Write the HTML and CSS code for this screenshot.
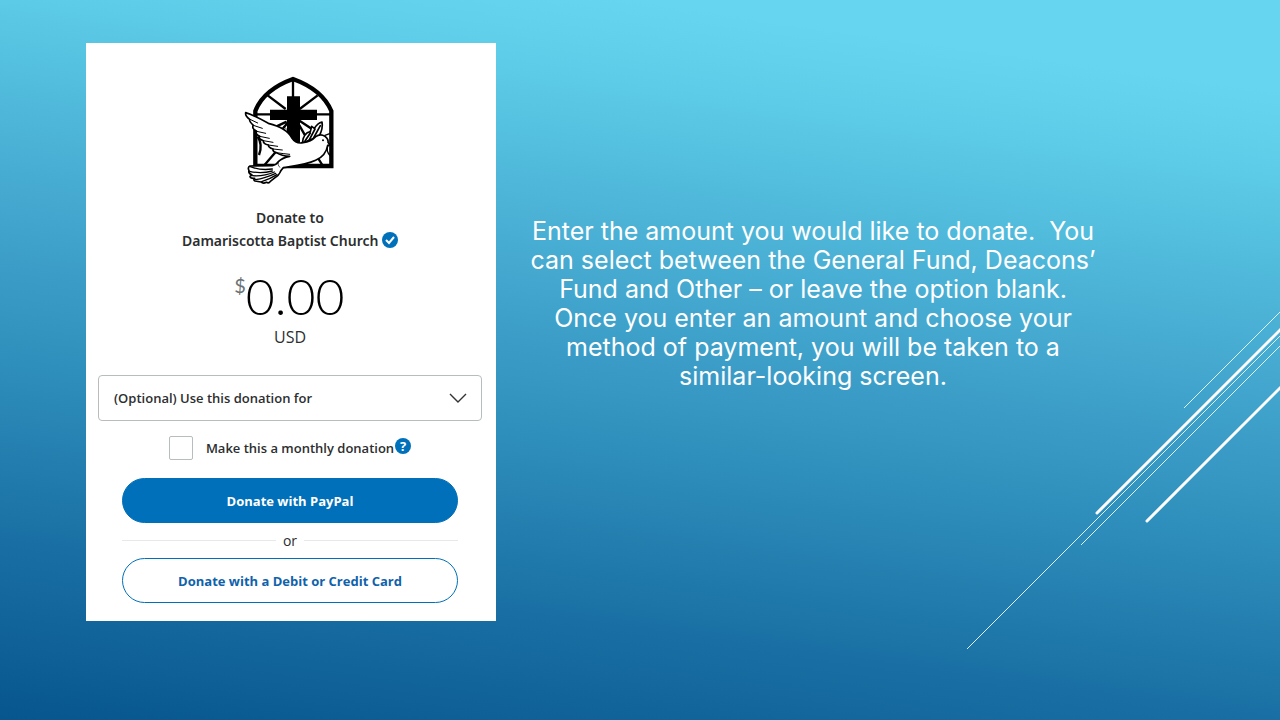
FILE: index.html
```html
<!DOCTYPE html>
<html lang="en">
<head>
    <meta charset="UTF-8">
    <meta name="viewport" content="width=device-width, initial-scale=1.0">
    <title>Donate - Damariscotta Baptist Church</title>
    <link rel="stylesheet" href="styles.css">
</head>
<body>
    <svg class="streaks" viewBox="0 0 320 360" aria-hidden="true">
        <g stroke="#d9f2fa" stroke-width="1">
            <path d="M224 108 L320 12"/>
            <path d="M7 349 L320 36"/>
            <path d="M121 245 L320 46"/>
        </g>
        <g stroke="#fff" stroke-width="3" stroke-linecap="round">
            <path d="M137 213 L322 28"/>
            <path d="M187 221 L322 86"/>
        </g>
    </svg>

    <main class="slide">
        <form class="card">
            <svg class="logo" viewBox="0 0 330 390" role="img" aria-label="Church window with cross and dove">
                <!-- window -->
                <path d="M61 305 V138 Q86 74 174 42 Q262 74 289 138 V303 H61" fill="#fff" stroke="#000" stroke-width="13"/>
                <g stroke="#000" stroke-width="7">
                    <path d="M174 42 V100 M64 148 H110 M240 148 H286 M98 91 L152 132 M248 91 L194 132"/>
                    <path d="M190 165 L240 198 M188 172 L214 218 M155 170 L112 190 M157 175 L140 195"/>
                    <path d="M140 240 L86 303 M68 215 Q84 240 72 270 M238 262 L264 303" fill="none"/>
                    <path d="M286 205 L268 212 M280 240 Q270 258 288 275" fill="none" stroke-width="4"/>
                </g>
                <path d="M156 94 H195 V134 H246 V165 H195 V240 H156 V165 H105 V134 H156 Z"/>
                <!-- dove -->
                <g fill="#fff" stroke="#000" stroke-width="5" stroke-linejoin="round" stroke-linecap="round">
                    <path d="M202 234 Q205 204 226 200 L230 184 L238 190 Q248 174 261 171 Q265 190 252 214 Z"/>
                    <path d="M210 228 L226 204 M222 226 L240 192 M234 222 L256 182" fill="none"/>
                    <path d="M32 143 C48 148 74 160 100 175 C136 184 160 198 170 218 Q184 238 204 233 C220 231 232 226 242 215 Q256 205 270 214 Q281 222 279 232 L285 240 L278 241 C275 260 264 276 242 286 C212 300 178 303 145 308 Q136 318 134 324 Q130 332 124 335 L106 349 Q102 356 94 352 Q84 357 78 351 L60 348 Q54 345 59 340 Q46 341 45 334 L51 330 Q39 324 42 317 Q37 307 45 303 L112 302 Q124 300 130 290 Q142 278 164 274 Q140 273 124 263 Q112 260 114 252 Q100 248 100 240 Q84 237 85 227 Q70 222 74 214 Q60 207 65 199 Q49 190 55 181 Q42 169 44 163 Q30 153 32 143 Z"/>
                    <path d="M45 163 L68 174 M55 181 L82 190 M65 199 L92 205 M74 214 L103 220 M85 227 L114 232 M100 240 L128 244 M114 252 L142 255 M124 263 Q145 266 164 268" fill="none" stroke-width="3"/>
                    <path d="M46 305 Q76 317 112 312 M44 319 Q77 327 112 318 M53 332 Q84 335 118 321 M61 344 Q90 340 122 325 M80 350 Q105 342 126 329" fill="none" stroke-width="4"/>
                    <path d="M145 184 Q170 202 176 226 M130 290 Q126 301 134 307" fill="none" stroke-width="2"/>
                </g>
                <circle cx="264" cy="226" r="3"/>
            </svg>

            <h1 class="payee">Donate to<br>Damariscotta Baptist Church
                <svg class="badge" viewBox="0 0 16 16" role="img" aria-label="Verified">
                    <circle cx="8" cy="8" r="8" fill="#0070ba"/>
                    <path d="M4 8 L7 11 L12 5" fill="none" stroke="#fff" stroke-width="2"/>
                </svg>
            </h1>

            <div class="amount">
                <span class="sign">$</span>
                <input type="text" value="0.00" aria-label="Amount">
            </div>
            <div class="currency">USD</div>

            <div class="purpose">
                <select aria-label="Use this donation for">
                    <option>(Optional) Use this donation for</option>
                    <option>General Fund</option>
                    <option>Deacons’ Fund</option>
                    <option>Other</option>
                </select>
                <svg class="arrow" viewBox="0 0 18 10" aria-hidden="true">
                    <path d="M1 1 L9 9 L17 1" fill="none" stroke="#333" stroke-width="1.4"/>
                </svg>
            </div>

            <div class="monthly">
                <input type="checkbox" id="monthly">
                <label for="monthly">Make this a monthly donation</label>
                <button type="button" class="help" aria-label="Help">?</button>
            </div>

            <button type="button" class="btn paypal-btn">Donate with PayPal</button>
            <div class="or">or</div>
            <button type="button" class="btn card-btn">Donate with a Debit or Credit Card</button>
        </form>

        <p class="instructions">
            Enter the amount you would like to donate. &nbsp;You<br>
            can select between the General Fund, Deacons’<br>
            Fund and Other – or leave the option blank.<br>
            Once you enter an amount and choose your<br>
            method of payment, you will be taken to a<br>
            similar-looking screen.
        </p>
    </main>
</body>
</html>
```

FILE: styles.css
```css
* {
    box-sizing: border-box;
}
body {
    margin: 0;
    min-height: 100vh;
    position: relative;
    font-family: "Open Sans", "Noto Sans", sans-serif;
    color: #2c2e2f;
    background: linear-gradient(188deg, #66d6f0 10%, #5ccbe7 20%, #45a9d0 41%, #2f8fbc 60%, #196fa3 80%, #07568e 100%);
}
/* diagonal lines on the right edge */
.streaks {
    position: absolute;
    right: 0;
    top: 300px;
    width: 320px;
    height: 360px;
}
.slide {
    position: relative;
    display: flex;
    align-items: flex-start;
    gap: 20px;
    padding: 43px 170px 43px 86px;
}
.card {
    flex: 0 0 410px;
    display: flex;
    flex-direction: column;
    align-items: center;
    padding: 22px 14px 18px 12px;
    background-color: white;
}
.logo {
    width: 110px;
    height: 130px;
}
.payee {
    margin: 11px 0 0;
    font-family: "Noto Sans", sans-serif;
    font-size: 14px;
    line-height: 23px;
    font-weight: 600;
    text-align: center;
}
.badge {
    width: 16px;
    height: 16px;
    vertical-align: -2px;
}
.amount {
    display: flex;
    align-items: flex-start;
    margin-top: 20px;
}
.sign {
    font-family: Lato, sans-serif;
    font-size: 20px;
    line-height: 26px;
    color: #6c7378;
}
.amount input {
    width: 100px;
    height: 48px;
    margin-bottom: 4px;
    padding: 0;
    border: none;
    background: none;
    font-family: Lato, sans-serif;
    font-size: 50px;
    font-weight: 300;
    color: black;
}
.currency {
    font-size: 16px;
    line-height: 26px;
}
.purpose {
    position: relative;
    width: 100%;
    margin-top: 25px;
}
.purpose select {
    appearance: none;
    display: block;
    width: 100%;
    height: 46px;
    padding: 0 40px 0 15px;
    border: 1px solid #b7bcbf;
    border-radius: 4px;
    background-color: white;
    font-family: inherit;
    font-size: 13px;
    font-weight: 600;
    color: #2c2e2f;
}
.arrow {
    position: absolute;
    right: 15px;
    top: 18px;
    width: 18px;
    height: 10px;
}
.monthly {
    display: flex;
    align-items: center;
    margin-top: 15px;
    font-size: 13px;
    font-weight: 600;
}
.monthly input {
    appearance: none;
    width: 24px;
    height: 24px;
    margin: 0 13px 0 0;
    border: 1px solid #b7bcbf;
    border-radius: 2px;
    background-color: white;
}
.help {
    width: 16px;
    height: 16px;
    margin: 0 0 4px 1px;
    padding: 0;
    border: none;
    border-radius: 50%;
    background-color: #0070ba;
    color: white;
    font-family: inherit;
    font-size: 13px;
    line-height: 16px;
    font-weight: 700;
}
.btn {
    width: 336px;
    height: 45px;
    border: 1px solid #0070ba;
    border-radius: 23px;
    font-family: inherit;
    font-size: 13px;
    font-weight: 700;
    cursor: pointer;
}
.paypal-btn {
    margin-top: 18px;
    background-color: #0070ba;
    color: white;
}
.card-btn {
    background-color: white;
    color: #0f62ab;
}
.or {
    display: flex;
    align-items: center;
    gap: 7px;
    width: 336px;
    font-size: 14px;
    line-height: 35px;
}
.or::before,
.or::after {
    content: "";
    flex: 1;
    height: 1px;
    background-color: #e6e8ea;
}
.instructions {
    flex: 1;
    margin: 174px 0 0;
    font-family: "Century Gothic", Inter, sans-serif;
    font-size: 25px;
    line-height: 29px;
    text-align: center;
    white-space: nowrap;
    color: white;
}
```
